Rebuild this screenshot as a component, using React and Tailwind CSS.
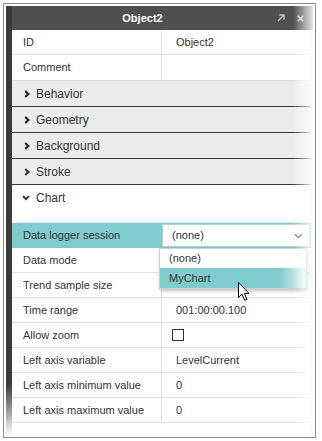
import React from "react";

const ChevRight = () => (
  <svg width="6" height="8" viewBox="0 0 6 8" className="block">
    <path d="M1.2 1 L4.4 4 L1.2 7" fill="none" stroke="#222" strokeWidth="2.1" />
  </svg>
);

const ChevDown = () => (
  <svg width="8" height="6" viewBox="0 0 8 6" className="block">
    <path d="M1 1.2 L4 4.2 L7 1.2" fill="none" stroke="#333" strokeWidth="1.9" />
  </svg>
);

function Row({ label, children }) {
  return (
    <div className="flex h-[25px] border-b border-[#e2e2e2]">
      <div className="w-[150px] shrink-0 flex items-center pl-[11px] border-r border-[#e2e2e2]">
        {label}
      </div>
      <div className="flex-1 flex items-center pl-[14px]">{children}</div>
    </div>
  );
}

function Section({ label, open }) {
  return (
    <div
      className={
        "flex items-center h-[26px] text-[12px] " +
        (open ? "bg-white" : "bg-[#ebedec] border-b border-[#3a3a3a]")
      }
    >
      <div className="w-[23px] flex justify-end pr-[5px]">
        {open ? <ChevDown /> : <ChevRight />}
      </div>
      <span className="pl-[1px]">{label}</span>
    </div>
  );
}

export default function App() {
  return (
    <div className="w-[322px] h-[441px] bg-white p-[3px] font-['Liberation_Sans',Arial,sans-serif] text-[11px] text-[#333]">
      <div className="w-[313px] h-[435px] border border-[#8c8c8c] p-[2px]">
        <div className="relative flex h-full">
          <div className="w-[6px] shrink-0 bg-linear-to-b from-[#3b3b3b] from-[88%] to-white" />
          <div className="flex-1 flex flex-col">
            <div className="h-[24px] bg-[#4f4f4f] flex items-center">
              <div className="flex-1 text-center text-white font-bold text-[11px]">Object2</div>
              <div className="w-[40px] flex items-center gap-[12px] pl-[4px]">
                <svg width="8" height="8" viewBox="0 0 8 8" className="block">
                  <path d="M1 7 L7 1 M2.5 1 L7 1 L7 5.5" fill="none" stroke="#c4c4c4" strokeWidth="1.4" />
                </svg>
                <svg width="7" height="7" viewBox="0 0 7 7" className="block">
                  <path d="M0.7 0.7 L6.3 6.3 M6.3 0.7 L0.7 6.3" fill="none" stroke="#dadada" strokeWidth="1.4" />
                </svg>
              </div>
            </div>
            <div className="relative flex-1 border-r border-[#e6e6e6] mr-[1px]">
              <div className="flex h-[25px] border-b border-[#e2e2e2]">
                <div className="w-[150px] shrink-0 flex items-center pl-[11px] border-r border-[#e2e2e2]">ID</div>
                <div className="flex-1 flex items-center pl-[14px]">Object2</div>
              </div>
              <div className="flex h-[26px] border-b border-[#e2e2e2]">
                <div className="w-[150px] shrink-0 flex items-center pl-[11px] border-r border-[#e2e2e2]">Comment</div>
                <div className="flex-1" />
              </div>
              <Section label="Behavior" />
              <Section label="Geometry" />
              <Section label="Background" />
              <Section label="Stroke" />
              <Section label="Chart" open />
              <div className="h-[12px] ml-[5px] border-b border-[#dfe5e6]" />
              <div className="relative flex h-[25px] bg-[#7fcbce]">
                <div className="w-[150px] shrink-0 flex items-center pl-[11px]">Data logger session</div>
                <div className="flex-1 py-[1px] pr-[1px]">
                  <div className="h-full bg-white border border-[#a9d8da] flex items-center pl-[9px] pr-[6px]">
                    <span className="flex-1">(none)</span>
                    <svg width="9" height="6" viewBox="0 0 9 6" className="block">
                      <path d="M1 1.3 L4.5 4.5 L8 1.3" fill="none" stroke="#777" strokeWidth="1.5" />
                    </svg>
                  </div>
                </div>
                <div className="absolute left-[147px] top-full w-[148px] z-10 bg-white border border-[#cfcfcf] shadow-[1px_2px_4px_rgba(0,0,0,0.25)]">
                  <div className="h-[19px] flex items-center pl-[9px] text-[#2f3a4a]">(none)</div>
                  <div className="h-[20px] flex items-center pl-[9px] bg-linear-to-r from-[#7fcbce] from-[82%] to-[#e9f6f6]">MyChart</div>
                </div>
              </div>
              <Row label="Data mode" />
              <Row label="Trend sample size">10</Row>
              <Row label="Time range">001:00:00.100</Row>
              <Row label="Allow zoom">
                <div className="w-[12px] h-[12px] border border-[#333] bg-white -ml-[4px]" />
              </Row>
              <Row label="Left axis variable">LevelCurrent</Row>
              <Row label="Left axis minimum value">0</Row>
              <Row label="Left axis maximum value">0</Row>
              <svg width="13" height="20" viewBox="0 0 13 20" className="absolute left-[226px] top-[252px] z-20">
                <path
                  d="M0.5 0.5 L0.5 15.5 L4 12.2 L6.6 18.3 L8.9 17.3 L6.4 11.4 L11 11.4 Z"
                  fill="white"
                  stroke="black"
                  strokeWidth="1"
                  strokeLinejoin="round"
                />
              </svg>
            </div>
          </div>
          <div className="absolute right-0 top-0 bottom-0 w-[20px] bg-linear-to-r from-white/0 to-white/85 z-30 pointer-events-none" />
        </div>
      </div>
    </div>
  );
}
